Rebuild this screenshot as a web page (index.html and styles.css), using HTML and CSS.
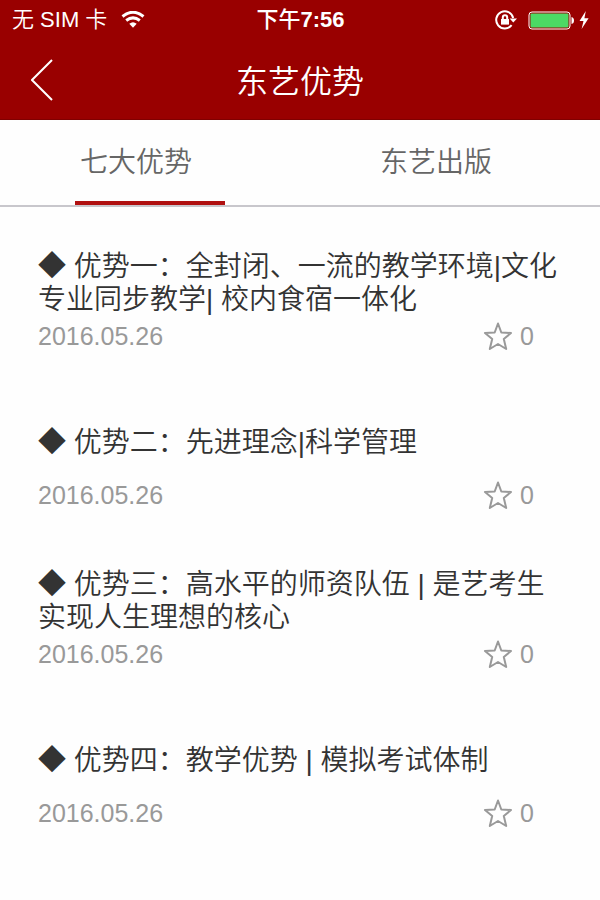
FILE: index.html
```html
<!DOCTYPE html>
<html lang="zh-CN">

<head>
    <meta charset="UTF-8">
    <meta name="viewport" content="width=device-width, initial-scale=1">
    <title>东艺优势</title>
    <link rel="stylesheet" href="styles.css">
</head>

<body>
    <svg class="defs" aria-hidden="true">
        <symbol id="star" viewBox="0 0 30 30">
            <path d="M15 2.5 L18.3 11.5 L28 12 L20.8 18 L23.2 28 L15 23 L6.8 28 L9.2 18 L2 12 L11.7 11.5 Z" />
        </symbol>
    </svg>

    <header class="header">
        <div class="status">
            <div class="status-left">
                <span>无 SIM 卡</span>
                <svg class="wifi" viewBox="0 0 24 18" aria-hidden="true">
                    <path d="M1.5 5.5 Q12 -3 22.5 5.5" />
                    <path d="M5.2 9.5 Q12 4.2 18.8 9.5" />
                    <path class="wifi-dot" d="M8.3 12.8 Q12 9.8 15.7 12.8 L12 16.8 Z" />
                </svg>
            </div>
            <div class="status-time"><span>下午</span>7:56</div>
            <div class="status-right">
                <svg class="lock" viewBox="0 0 24 20" aria-hidden="true">
                    <path d="M16.6 15.2 A8.6 8.6 0 1 1 18.2 8" />
                    <path class="fill" d="M14.6 8.4 H22 L18.3 12.6 Z" />
                    <path class="fill" d="M6 9 H14 V14.6 H6 Z" />
                    <path d="M7.8 9 V7.4 A2.2 2.2 0 0 1 12.2 7.4 V9" />
                </svg>
                <svg class="battery" viewBox="0 0 46 19" aria-hidden="true">
                    <rect class="battery-case" x="1" y="1" width="41" height="17" rx="3" />
                    <rect class="battery-level" x="2.5" y="2.5" width="38" height="14" rx="1" />
                    <path class="battery-tip" d="M43.5 6 Q46 6.5 46 9.5 Q46 12.5 43.5 13 Z" />
                </svg>
                <svg class="bolt" viewBox="0 0 10 18" aria-hidden="true">
                    <path d="M6.8 0 L0.5 10 H4.5 L2.6 18 L9.6 7.2 H5.4 Z" />
                </svg>
            </div>
        </div>
        <div class="navbar">
            <button class="back" type="button" aria-label="返回">
                <svg viewBox="0 0 22 42" aria-hidden="true">
                    <path d="M21 1 L1 21 L21 41" />
                </svg>
            </button>
            <h1>东艺优势</h1>
        </div>
    </header>

    <nav class="tabs">
        <a class="tab active" href="#youshi">七大优势</a>
        <a class="tab" href="#chuban">东艺出版</a>
    </nav>

    <main class="list" id="youshi">
        <article class="item">
            <h2>◆ 优势一：全封闭、一流的教学环境|文化专业同步教学| 校内食宿一体化</h2>
            <div class="meta">
                <time datetime="2016-05-26">2016.05.26</time>
                <button class="fav" type="button" aria-label="收藏 0"><svg><use href="#star" /></svg>0</button>
            </div>
        </article>
        <article class="item">
            <h2>◆ 优势二：先进理念|科学管理</h2>
            <div class="meta">
                <time datetime="2016-05-26">2016.05.26</time>
                <button class="fav" type="button" aria-label="收藏 0"><svg><use href="#star" /></svg>0</button>
            </div>
        </article>
        <article class="item">
            <h2>◆ 优势三：高水平的师资队伍 | 是艺考生实现人生理想的核心</h2>
            <div class="meta">
                <time datetime="2016-05-26">2016.05.26</time>
                <button class="fav" type="button" aria-label="收藏 0"><svg><use href="#star" /></svg>0</button>
            </div>
        </article>
        <article class="item">
            <h2>◆ 优势四：教学优势 | 模拟考试体制</h2>
            <div class="meta">
                <time datetime="2016-05-26">2016.05.26</time>
                <button class="fav" type="button" aria-label="收藏 0"><svg><use href="#star" /></svg>0</button>
            </div>
        </article>
    </main>
</body>

</html>
```

FILE: styles.css
```css
* {
    box-sizing: border-box;
}

body {
    margin: 0;
    background: #fefefe;
    color: #333;
    font-family: "Liberation Sans", "Noto Sans CJK SC", sans-serif;
    font-weight: 350;
}

button {
    border: none;
    background: none;
    padding: 0;
    font: inherit;
    color: inherit;
    cursor: pointer;
}

svg {
    display: block;
    fill: none;
    flex: none;
}

.defs {
    width: 0;
    height: 0;
    position: absolute;
}

/* header */
.header {
    background: #990000;
    border-bottom: 1px solid #800000;
    color: #fff;
}

.status {
    display: grid;
    grid-template-columns: 1fr auto 1fr;
    align-items: center;
    height: 40px;
    padding: 0 11px 0 12px;
    font-size: 22px;
    line-height: 40px;
}

.status-left,
.status-right {
    display: flex;
    align-items: center;
}

.status-left {
    gap: 14px;
}

.status-right {
    justify-content: flex-end;
    gap: 5px;
}

.status-time {
    font-weight: 700;
}

.status-time span {
    font-weight: 500;
}

.wifi {
    width: 24px;
    height: 18px;
    stroke: #fff;
    stroke-width: 3;
}

.wifi .wifi-dot {
    fill: #fff;
    stroke: none;
}

.lock {
    width: 24px;
    height: 20px;
    margin-right: 4px;
    stroke: #fff;
    stroke-width: 2;
}

.lock .fill {
    fill: #fff;
    stroke: none;
}

.battery {
    width: 46px;
    height: 19px;
}

.battery-case {
    stroke: #fff;
    stroke-width: 1;
}

.battery-level {
    fill: #4cd964;
}

.battery-tip,
.bolt {
    fill: #fff;
}

.bolt {
    width: 10px;
    height: 18px;
}

.navbar {
    display: grid;
    grid-template-columns: 60px 1fr 60px;
    align-items: center;
    height: 79px;
}

.back {
    justify-self: center;
    padding-left: 24px;
}

.back svg {
    width: 22px;
    height: 42px;
    stroke: #fff;
    stroke-width: 2;
}

.navbar h1 {
    margin: 0;
    padding-top: 4px;
    font-size: 32px;
    font-weight: 350;
    line-height: 40px;
    text-align: center;
}

/* tabs */
.tabs {
    display: flex;
    border-bottom: 2px solid #c8c7cc;
}

.tab {
    flex: 1;
    position: relative;
    padding-right: 28px;
    color: #666;
    font-size: 28px;
    line-height: 85px;
    text-align: center;
    text-decoration: none;
}

.tab.active::after {
    content: "";
    position: absolute;
    left: 25%;
    right: 25%;
    bottom: 0;
    height: 4px;
    background: #b01010;
}

/* list */
.list {
    padding: 42px 38px 0;
}

.item {
    margin-bottom: 53px;
}

.item h2 {
    display: flex;
    align-items: center;
    min-height: 68px;
    margin: 0;
    font-size: 28px;
    font-weight: 350;
    line-height: 33px;
}

.meta {
    display: flex;
    align-items: center;
    justify-content: space-between;
    height: 38px;
    padding-right: 28px;
    color: #999;
    font-size: 25px;
}

.fav {
    display: flex;
    align-items: center;
    gap: 7px;
}

.fav svg {
    width: 30px;
    height: 30px;
    stroke: #999;
    stroke-width: 2;
    stroke-linejoin: round;
}
```
